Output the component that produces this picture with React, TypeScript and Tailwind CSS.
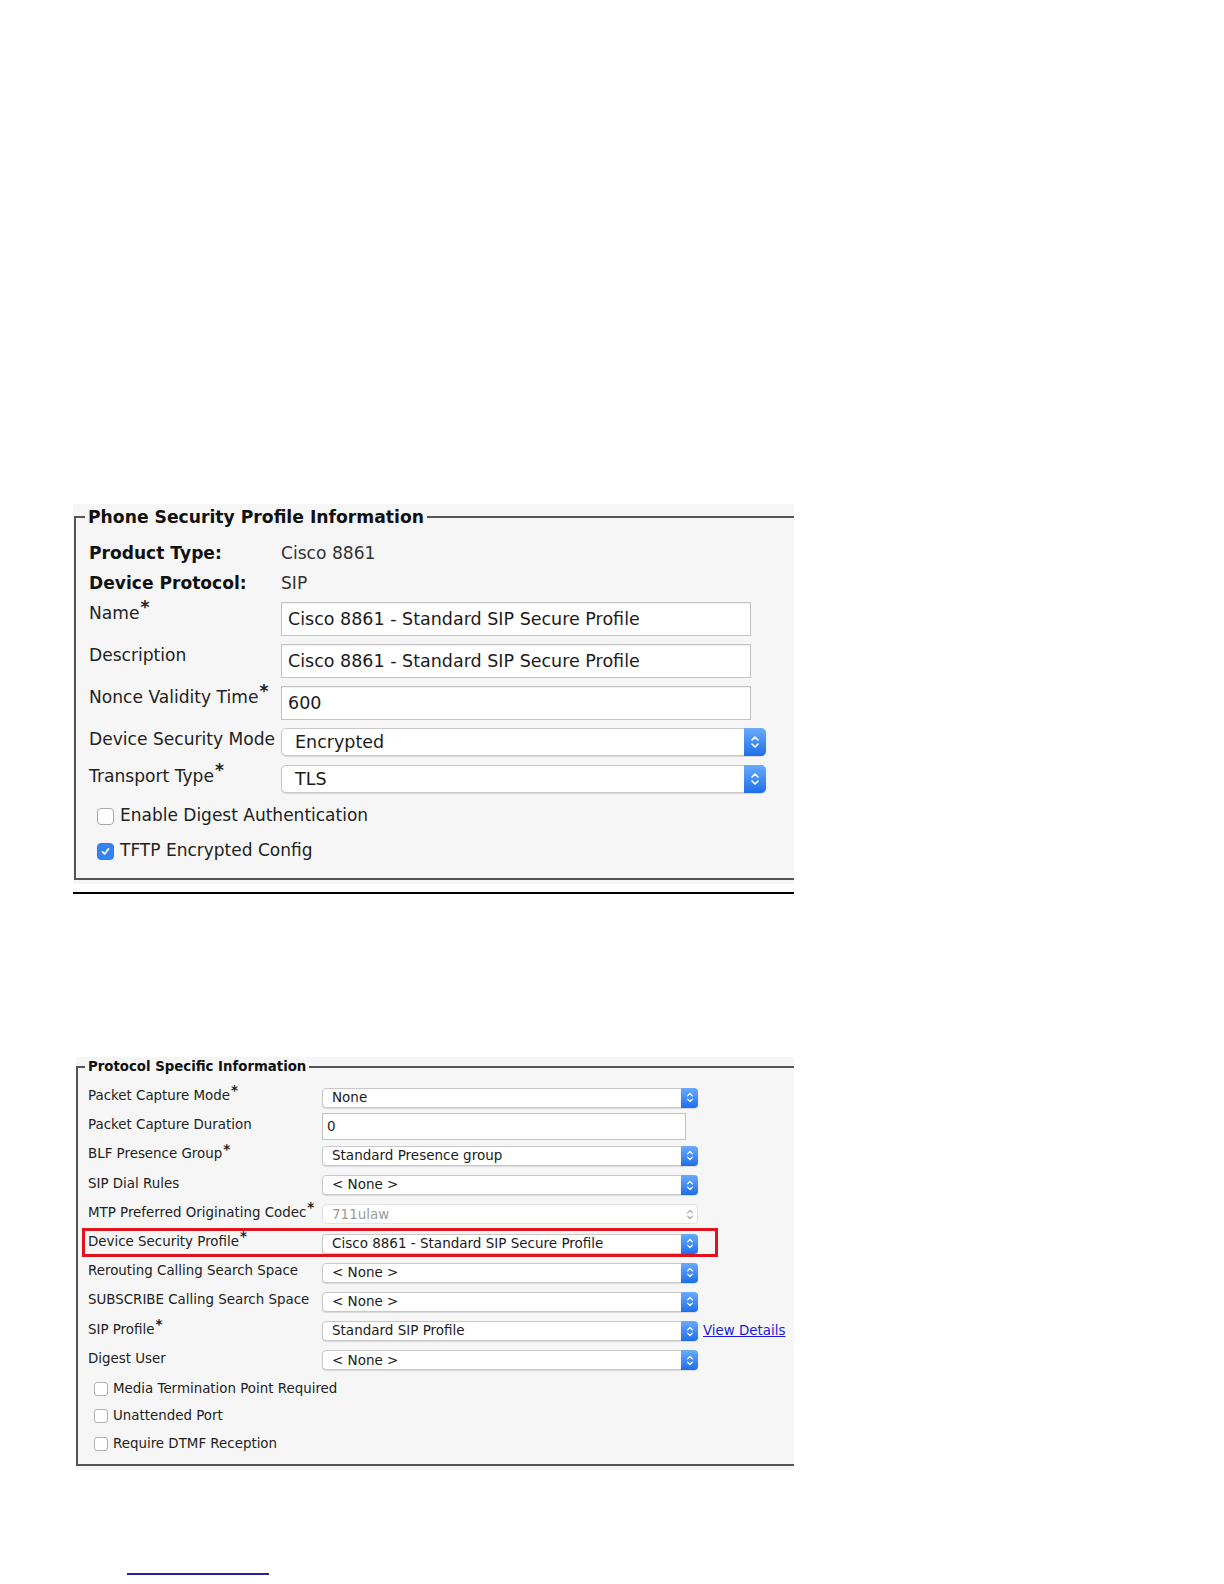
import React from 'react';

type StepProps = { w: number; disabled?: boolean; big?: boolean };

const Stepper: React.FC<StepProps> = ({ disabled, big }) => {
  const size = big ? 'w-[22px] -my-px -mr-px self-stretch rounded-r-[5px]' : 'w-[17px] -my-px -mr-px self-stretch rounded-r-[4px]';
  const fill = disabled ? 'bg-transparent' : 'bg-gradient-to-b from-[#69abfb] to-[#1c6ee9]';
  const stroke = disabled ? '#a9a9a9' : '#ffffff';
  return (
    <div className={`${size} ${fill} flex items-center justify-center`}>
      <svg width={big ? 10 : 8} height={big ? 16 : 13} viewBox="0 0 10 16" fill="none">
        <path d="M2 6 L5 3 L8 6" stroke={stroke} strokeWidth="1.6" strokeLinecap="round" strokeLinejoin="round" />
        <path d="M2 10 L5 13 L8 10" stroke={stroke} strokeWidth="1.6" strokeLinecap="round" strokeLinejoin="round" />
      </svg>
    </div>
  );
};

const Req = () => <sup className="ml-px text-[1em] font-bold top-[-0.35em]">*</sup>;

const TopInput = ({ value }: { value: string }) => (
  <div className="flex h-[34px] w-[470px] items-center border border-[#c3c3c3] bg-white pl-[6px] text-[17.5px] text-[#1b1b1b] shadow-[inset_0_1px_1px_rgba(0,0,0,0.06)]">
    {value}
  </div>
);

const TopSelect = ({ value }: { value: string }) => (
  <div className="flex h-[28px] w-[485px] items-center rounded-[5px] border border-[#c8c8c8] bg-white shadow-[0_1px_1px_rgba(0,0,0,0.12)]">
    <span className="flex-1 pl-[13px] text-[17.5px] text-[#1b1b1b]">{value}</span>
    <Stepper w={22} big />
  </div>
);

const SmallSelect = ({ value, disabled }: { value: string; disabled?: boolean }) => (
  <div
    className={`flex h-[20px] w-[376px] items-center rounded-[4px] border bg-white ${
      disabled ? 'border-[#e2e2e2]' : 'border-[#c8c8c8] shadow-[0_1px_1px_rgba(0,0,0,0.12)]'
    }`}
  >
    <span className={`flex-1 pl-[9px] text-[13.5px] leading-none ${disabled ? 'text-[#9a9a9a]' : 'text-[#1b1b1b]'}`}>{value}</span>
    <Stepper w={17} disabled={disabled} />
  </div>
);

const TopCheck = ({ label, checked }: { label: string; checked?: boolean }) => (
  <div className="flex h-[22px] items-center">
    <span
      className={`ml-[8px] flex h-[17px] w-[17px] items-center justify-center rounded-[4px] border ${
        checked ? 'border-[#2e7cf0] bg-[#3583f2]' : 'border-[#a9a9a9] bg-white'
      }`}
    >
      {checked && (
        <svg width="11" height="11" viewBox="0 0 11 11" fill="none">
          <path d="M2.5 5.8 L4.6 8 L8.6 2.8" stroke="#fff" strokeWidth="1.7" strokeLinecap="round" strokeLinejoin="round" />
        </svg>
      )}
    </span>
    <span className="ml-[6px] text-[17px] text-[#222]">{label}</span>
  </div>
);

const SmallCheck = ({ label }: { label: string }) => (
  <div className="flex h-[27.5px] items-center">
    <span className="ml-[6px] h-[14px] w-[14px] rounded-[3px] border border-[#b0b0b0] bg-white" />
    <span className="ml-[5px] text-[13.4px] text-[#222]">{label}</span>
  </div>
);

const protocolRows: { label: string; req?: boolean; value: string; kind: 'select' | 'input' | 'disabled'; boxed?: boolean; link?: boolean }[] = [
  { label: 'Packet Capture Mode', req: true, value: 'None', kind: 'select' },
  { label: 'Packet Capture Duration', value: '0', kind: 'input' },
  { label: 'BLF Presence Group', req: true, value: 'Standard Presence group', kind: 'select' },
  { label: 'SIP Dial Rules', value: '< None >', kind: 'select' },
  { label: 'MTP Preferred Originating Codec', req: true, value: '711ulaw', kind: 'disabled' },
  { label: 'Device Security Profile', req: true, value: 'Cisco 8861 - Standard SIP Secure Profile', kind: 'select', boxed: true },
  { label: 'Rerouting Calling Search Space', value: '< None >', kind: 'select' },
  { label: 'SUBSCRIBE Calling Search Space', value: '< None >', kind: 'select' },
  { label: 'SIP Profile', req: true, value: 'Standard SIP Profile', kind: 'select', link: true },
  { label: 'Digest User', value: '< None >', kind: 'select' },
];

export default function App() {
  return (
    <div className="min-h-[1584px] w-[1224px] bg-white pl-[73px] pt-[504px] font-['DejaVu_Sans',sans-serif] text-[#222]">
      {/* Phone Security Profile Information */}
      <div className="w-[721px] bg-[#f6f6f6] pb-[4px] pt-[2px]">
        <fieldset className="ml-px border-b-2 border-l-2 border-t-2 border-r-0 border-[#555] pb-[16px] pl-[13px]">
          <legend className="-ml-[4px] px-[3px] text-[17.2px] font-bold leading-[22px] text-[#111]">
            Phone Security Profile Information
          </legend>
          <div className="flex flex-col pt-[11px] text-[17.1px]">
            <div className="flex h-[30px] items-center">
              <span className="w-[192px] font-bold text-[#111]">Product Type:</span>
              <span className="text-[#333]">Cisco 8861</span>
            </div>
            <div className="flex h-[30px] items-center">
              <span className="w-[192px] font-bold text-[#111]">Device Protocol:</span>
              <span className="text-[#333]">SIP</span>
            </div>
            <div className="mt-[3px] flex items-start">
              <span className="w-[192px] leading-[22px]">Name<Req /></span>
              <TopInput value="Cisco 8861 - Standard SIP Secure Profile" />
            </div>
            <div className="mt-[8px] flex items-start">
              <span className="w-[192px] leading-[22px]">Description</span>
              <TopInput value="Cisco 8861 - Standard SIP Secure Profile" />
            </div>
            <div className="mt-[8px] flex items-start">
              <span className="w-[192px] leading-[22px]">Nonce Validity Time<Req /></span>
              <TopInput value="600" />
            </div>
            <div className="mt-[8px] flex items-start">
              <span className="w-[192px] leading-[22px]">Device Security Mode</span>
              <TopSelect value="Encrypted" />
            </div>
            <div className="mt-[9px] flex items-start">
              <span className="w-[192px] leading-[22px]">Transport Type<Req /></span>
              <TopSelect value="TLS" />
            </div>
            <div className="mt-[12px]">
              <TopCheck label="Enable Digest Authentication" />
            </div>
            <div className="mt-[13px]">
              <TopCheck label="TFTP Encrypted Config" checked />
            </div>
          </div>
        </fieldset>
      </div>
      <div className="mt-[8px] h-[2px] w-[721px] bg-black" />

      {/* Protocol Specific Information */}
      <div className="ml-[3px] mt-[163px] w-[718px] bg-[#f6f6f6] pb-[4px] pt-px">
        <fieldset className="border-b-2 border-l-2 border-t-2 border-r-0 border-[#555] pb-[7px] pl-[10px]">
          <legend className="-ml-[3px] px-[3px] text-[13.3px] font-bold leading-[18px] text-[#111]">
            Protocol Specific Information
          </legend>
          <div className="flex flex-col pt-[7px] text-[13.4px]">
            {protocolRows.map(row => (
              <div key={row.label} className="relative flex h-[29.2px] items-center">
                <span className="mb-[3px] w-[234px] text-[#222]">
                  {row.label}
                  {row.req && <Req />}
                </span>
                {row.kind === 'input' ? (
                  <div className="flex h-[27px] w-[364px] items-center border border-[#c3c3c3] bg-white pl-[4px] text-[#1b1b1b]">
                    {row.value}
                  </div>
                ) : (
                  <SmallSelect value={row.value} disabled={row.kind === 'disabled'} />
                )}
                {row.link && <a className="ml-[5px] text-[#1a1ad8] underline">View Details</a>}
                {row.boxed && (
                  <div className="absolute -left-[6px] -top-px h-[29px] w-[636px] border-[3px] border-[#e1141d]" />
                )}
              </div>
            ))}
            <SmallCheck label="Media Termination Point Required" />
            <SmallCheck label="Unattended Port" />
            <SmallCheck label="Require DTMF Reception" />
          </div>
        </fieldset>
      </div>

      <div className="ml-[54px] mt-[103px] h-[2px] w-[142px] bg-[#22229a]" />
    </div>
  );
}
